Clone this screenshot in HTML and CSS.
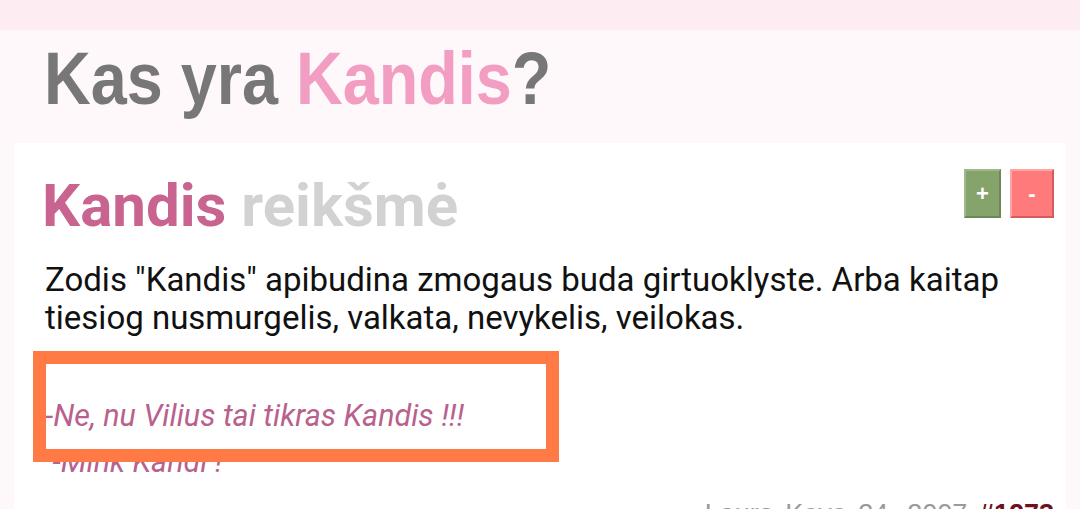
FILE: index.html
```html
<!DOCTYPE html>
<html lang="lt">
<head>
<meta charset="utf-8">
<title>Kas yra Kandis?</title>
<link rel="stylesheet" href="styles.css">
</head>
<body>
<div class="topbar"></div>
<main class="page">
  <h1 class="title"><span class="title-inner">Kas yra <span class="pink">Kandis</span>?</span></h1>
  <section class="card">
    <div class="card-head">
      <h2 class="word"><span class="word-name">Kandis</span> <span class="word-sub">reikšmė</span></h2>
      <div class="votes">
        <button class="vote up">+</button>
        <button class="vote down">-</button>
      </div>
    </div>
    <p class="meaning">Zodis "Kandis" apibudina zmogaus buda girtuoklyste. Arba kaitap tiesiog nusmurgelis, valkata, nevykelis, veilokas.</p>
    <p class="example">-Ne, nu Vilius tai tikras Kandis !!!<br>&nbsp;-Mink Kandi !</p>
    <div class="meta"><span class="author">Laura Kovo 24, 2007</span> <span class="num">#1273</span></div>
  </section>
</main>
<div class="highlight"></div>
</body>
</html>
```

FILE: styles.css
```css
html, body {
  margin: 0;
  padding: 0;
}
body {
  background: #fff8fa;
  font-family: "Roboto", "Liberation Sans", sans-serif;
  overflow: hidden;
  height: 509px;
}
.topbar {
  height: 30px;
  background: #fdecf2;
}
.page {
  display: flex;
  flex-direction: column;
}
.title {
  margin: 0 0 24px 0;
  padding: 9px 0 0 44px;
  font-family: "Liberation Sans", Arial, sans-serif;
  font-weight: bold;
  font-size: 74px;
  line-height: 80px;
  color: #777777;
  white-space: nowrap;
}
.title-inner {
  display: inline-block;
  transform: scaleX(0.875);
  transform-origin: left center;
}
.pink {
  color: #f29ec3;
}
.card {
  margin: 0 14px;
  background: #ffffff;
  padding: 26px 12px 0 28px;
  height: 400px;
}
.card-head {
  display: flex;
  justify-content: space-between;
  align-items: flex-start;
}
.word {
  margin: 2px 0 0 0;
  font-family: "Roboto", sans-serif;
  font-weight: bold;
  font-size: 60px;
  line-height: 70px;
}
.word-name {
  color: #c8648f;
}
.word-sub {
  color: #d2d2d2;
}
.votes {
  display: flex;
  gap: 9px;
}
.vote {
  margin: 0;
  padding: 0;
  height: 49px;
  font-family: "Liberation Sans", Arial, sans-serif;
  font-weight: bold;
  font-size: 22px;
  color: #ffffff;
  border: 2px solid;
  line-height: 45px;
}
.up {
  width: 37px;
  background: #84a46c;
  border-color: #9dba8b #6c8858 #6c8858 #9dba8b;
}
.down {
  width: 44px;
  background: #ff7b7b;
  border-color: #ffa3a3 #d55c5c #d55c5c #ffa3a3;
}
.meaning {
  margin: 20px 30px 0 3px;
  font-size: 33px;
  line-height: 38px;
  color: #111111;
}
.example {
  margin: 56px 0 0 3px;
  font-style: italic;
  font-size: 30.5px;
  line-height: 46px;
  color: #b8618c;
}
.meta {
  text-align: right;
  margin-top: 14px;
  font-family: "Liberation Sans", Arial, sans-serif;
  font-size: 27px;
  word-spacing: 4px;
  color: #9a9a9a;
}
.num {
  color: #6e1020;
  font-weight: bold;
}
.highlight {
  position: absolute;
  left: 33px;
  top: 351px;
  width: 500px;
  height: 85px;
  border: 13px solid #ff7a45;
  pointer-events: none;
}
```
